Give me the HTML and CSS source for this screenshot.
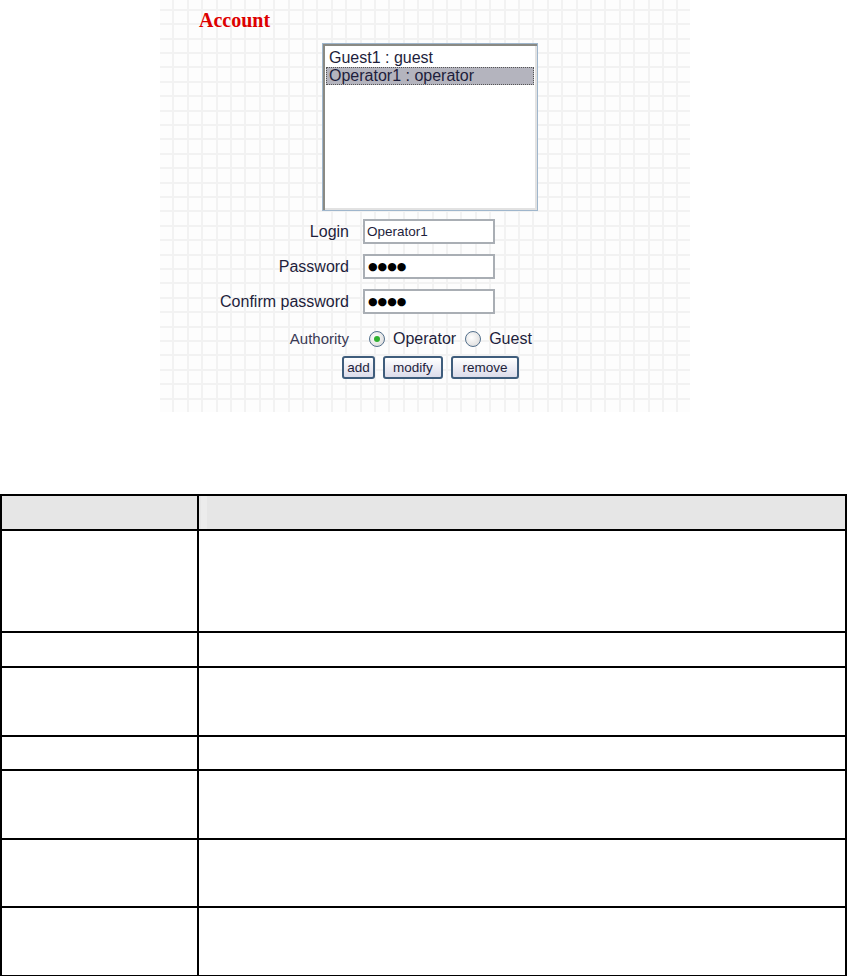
FILE: index.html
```html
<!doctype html>
<html lang="en">
    <head>
        <meta charset="UTF-8" />
        <meta name="viewport" content="width=device-width, initial-scale=1.0" />
        <title>Account</title>
        <link rel="stylesheet" href="styles.css">
    </head>
    <body>
        <div class="shot">
            <h2 class="title">Account</h2>

            <div class="listbox">
                <div class="opt">Guest1 : guest</div>
                <div class="opt selected">Operator1 : operator</div>
            </div>

            <div class="form">
                <div class="lbl">Login</div>
                <div class="field">Operator1</div>

                <div class="lbl">Password</div>
                <div class="field dots">&#9679;&#9679;&#9679;&#9679;</div>

                <div class="lbl">Confirm password</div>
                <div class="field dots">&#9679;&#9679;&#9679;&#9679;</div>

                <div class="lbl authority">Authority</div>
                <div class="radios authority">
                    <span class="radio checked"></span>
                    <span class="radio-text">Operator</span>
                    <span class="radio"></span>
                    <span class="radio-text">Guest</span>
                </div>
            </div>

            <div class="buttons">
                <button class="btn btn-add">add</button>
                <button class="btn btn-modify">modify</button>
                <button class="btn btn-remove">remove</button>
            </div>
        </div>

        <div class="spec">
            <div class="cell head"></div>
            <div class="cell head head-right"></div>

            <div class="cell rows-3"></div>
            <div class="cell rows-3"></div>

            <div class="cell rows-1"></div>
            <div class="cell rows-1"></div>

            <div class="cell rows-2"></div>
            <div class="cell rows-2"></div>

            <div class="cell rows-1 short"></div>
            <div class="cell rows-1 short"></div>

            <div class="cell rows-2"></div>
            <div class="cell rows-2"></div>

            <div class="cell rows-2 short"></div>
            <div class="cell rows-2 short"></div>

            <div class="cell rows-2"></div>
            <div class="cell rows-2"></div>
        </div>
    </body>
</html>
```

FILE: styles.css
```css
* {
    margin: 0;
    padding: 0;
    box-sizing: border-box;
}

body {
    font-family: "Liberation Sans", Arial, sans-serif;
    background: #fff;
    color: #222;
}

/* screenshot of the web UI, drawn on a grid paper background */
.shot {
    margin-left: 160px;
    width: 530px;
    height: 412px;
    background-color: #fdfdfd;
    background-image:
        repeating-linear-gradient(90deg, transparent 0 12.4px, #f2f2f2 12.4px 14.4px),
        repeating-linear-gradient(0deg, transparent 0 12.4px, #f2f2f2 12.4px 14.4px);
}

.title {
    font-family: "Liberation Serif", "Times New Roman", serif;
    font-size: 20px;
    line-height: 20px;
    font-weight: bold;
    color: #dd0000;
    padding: 10px 0 0 39px;
}

.listbox {
    margin: 13px 0 0 162px;
    width: 216px;
    height: 168px;
    background: #fff;
    border: 1px solid #9fb6cc;
    box-shadow: inset 2px 2px 0 #8a8a84, inset -2px -2px 0 #e2e2e2;
    padding: 5px 3px 0 3px;
}

.opt {
    height: 18px;
    line-height: 18px;
    font-size: 16px;
    padding-left: 3px;
    color: #1e1e3c;
}

.opt.selected {
    background: #b4b4be;
    outline: 1px dotted #555;
    outline-offset: -1px;
}

.form {
    display: grid;
    grid-template-columns: 189px 132px;
    column-gap: 14px;
    row-gap: 10px;
    align-items: center;
    margin-top: 8px;
}

.lbl {
    text-align: right;
    font-size: 16px;
    color: #1e1e3c;
}

.lbl.authority {
    font-size: 15px;
    color: #3a3a55;
    margin-top: 5px;
}

.field {
    height: 25px;
    background: #fff;
    border: 2px solid #a9aeb4;
    font-size: 13.5px;
    line-height: 21px;
    padding-left: 2px;
    color: #1e1e3c;
}

.field.dots {
    font-family: "DejaVu Sans", sans-serif;
    font-size: 11px;
    padding-left: 3px;
    color: #000;
}

.radios {
    display: flex;
    align-items: center;
    margin-top: 6px;
    padding-left: 6px;
    font-size: 16px;
    color: #1e1e3c;
    width: 230px;
}

.radio {
    width: 16px;
    height: 16px;
    border-radius: 50%;
    border: 1px solid #54708c;
    background: radial-gradient(circle at 40% 40%, #ffffff 0, #dedede 80%);
    display: flex;
    align-items: center;
    justify-content: center;
}

.radio.checked::after {
    content: "";
    width: 6px;
    height: 6px;
    border-radius: 50%;
    background: #2fb02f;
}

.radio-text {
    margin: 0 9px 0 8px;
}

.buttons {
    display: flex;
    gap: 8px;
    margin: 8px 0 0 182px;
}

.btn {
    height: 23px;
    padding: 0;
    font-family: "Liberation Sans", Arial, sans-serif;
    font-size: 13.5px;
    color: #1e1e3c;
    border: 2px solid #3f5d7c;
    border-radius: 3px;
    background: linear-gradient(#ffffff, #dcdcea);
}

.btn-add {
    width: 33px;
}

.btn-modify {
    width: 60px;
}

.btn-remove {
    width: 68px;
}

/* empty parameter table below the screenshot */
.spec {
    margin-top: 82px;
    display: grid;
    grid-template-columns: 197px 1fr;
    width: 847px;
    border-top: 2px solid #000;
    border-left: 2px solid #000;
}

.cell {
    border-right: 2px solid #000;
    border-bottom: 2px solid #000;
    height: 35px;
}

.head {
    background: #e6e6e6;
}

.head-right {
    background: linear-gradient(90deg, #e6e6e6 0 2px, #ececec 2px 8px, #e6e6e6 8px);
}

.rows-1.short {
    height: 34px;
}

.rows-2 {
    height: 69px;
}

.rows-2.short {
    height: 68px;
}

.rows-3 {
    height: 102px;
}
```
